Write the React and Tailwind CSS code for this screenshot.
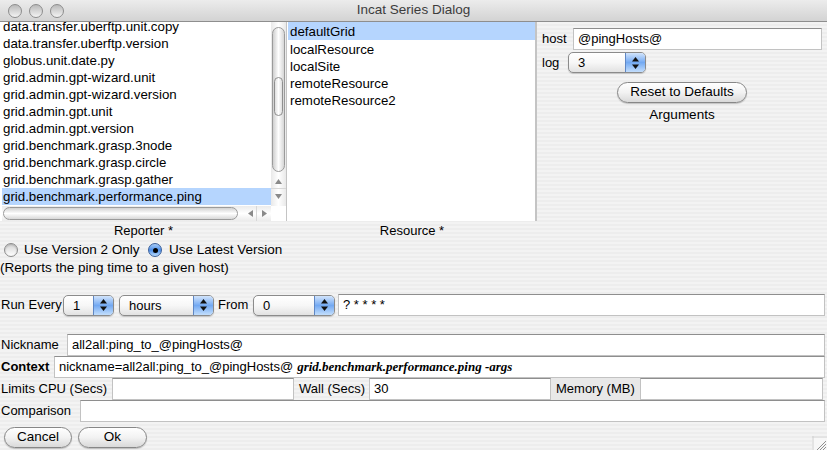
import clsx from "clsx";

const reporters = [
  "data.transfer.uberftp.unit.copy",
  "data.transfer.uberftp.version",
  "globus.unit.date.py",
  "grid.admin.gpt-wizard.unit",
  "grid.admin.gpt-wizard.version",
  "grid.admin.gpt.unit",
  "grid.admin.gpt.version",
  "grid.benchmark.grasp.3node",
  "grid.benchmark.grasp.circle",
  "grid.benchmark.grasp.gather",
  "grid.benchmark.performance.ping",
];

const resources = [
  "defaultGrid",
  "localResource",
  "localSite",
  "remoteResource",
  "remoteResource2",
];

function Arrow({ dir }) {
  const points = {
    up: "0,5 3.5,0 7,5",
    down: "0,0 3.5,5 7,0",
    left: "5,0 0,3.5 5,7",
    right: "0,0 5,3.5 0,7",
  }[dir];
  const size = dir === "up" || dir === "down" ? [7, 5] : [5, 7];
  return (
    <svg width={size[0]} height={size[1]} viewBox={`0 0 ${size[0]} ${size[1]}`}>
      <polygon points={points} fill="#8a8a8a" />
    </svg>
  );
}

function PopupArrows() {
  return (
    <svg width="7" height="12" viewBox="0 0 7 12">
      <polygon points="0,4.5 3.5,0 7,4.5" fill="#111" />
      <polygon points="0,7.5 3.5,12 7,7.5" fill="#111" />
    </svg>
  );
}

function Popup({ value, className }) {
  return (
    <div
      className={clsx(
        "flex h-[21px] items-stretch overflow-hidden rounded-[5px] border border-[#8b8b8b] bg-gradient-to-b from-white via-[#f7f7f7] to-[#e2e2e2] shadow-[0_1px_1px_rgba(0,0,0,0.18)]",
        className
      )}
    >
      <span className="flex-1 pl-[9px] leading-[19px]">{value}</span>
      <span className="flex w-[20px] items-center justify-center border-l border-[#5f87c4] bg-gradient-to-b from-[#d2e4fb] via-[#73a9f2] to-[#c3defc]">
        <PopupArrows />
      </span>
    </div>
  );
}

function Field({ value, className, children }) {
  return (
    <div
      className={clsx(
        "flex h-[22px] items-center overflow-hidden border border-[#c2c2c2] border-t-[#8e8e8e] bg-white pl-[4px] leading-[20px] whitespace-nowrap",
        className
      )}
    >
      {children ?? value}
    </div>
  );
}

function AquaButton({ label, className }) {
  return (
    <div
      className={clsx(
        "flex h-[21px] items-center justify-center rounded-full border border-[#878787] bg-gradient-to-b from-white via-[#f2f2f2] to-[#d9d9d9] shadow-[0_1px_1px_rgba(0,0,0,0.2)]",
        className
      )}
    >
      {label}
    </div>
  );
}

function Radio({ checked }) {
  return checked ? (
    <span className="flex h-[14px] w-[14px] shrink-0 items-center justify-center rounded-full border border-[#3b5f99] bg-gradient-to-b from-[#a9cdf7] via-[#4d8ee8] to-[#b9dcfc]">
      <span className="h-[5px] w-[5px] rounded-full bg-black" />
    </span>
  ) : (
    <span className="h-[14px] w-[14px] shrink-0 rounded-full border border-[#8c8c8c] bg-gradient-to-b from-[#d4d4d4] to-white shadow-[inset_0_1px_2px_rgba(0,0,0,0.2)]" />
  );
}

function ReporterList() {
  return (
    <div className="grid h-[199px] w-[287px] grid-cols-[1fr_15px] grid-rows-[1fr_15px] border-r-2 border-r-[#c4c4c4] bg-white pl-[2px]">
      <div className="overflow-hidden">
        <div className="-mt-[4px]">
          {reporters.map((name, i) => (
            <div
              key={name}
              className={clsx(
                "h-[17px] pl-[1px] text-[13.3px] leading-[17px] whitespace-nowrap",
                i === reporters.length - 1 && "bg-[#b5d5fe]"
              )}
            >
              {name}
            </div>
          ))}
        </div>
      </div>
      <div className="flex flex-col items-center bg-gradient-to-r from-[#e9e9e9] via-white to-[#e9e9e9] pt-[5px]">
        <div className="flex h-[145px] w-[13px] flex-col rounded-full border border-[#9b9b9b] bg-gradient-to-r from-[#cfcfcf] via-white to-[#d6d6d6] pt-[49px]">
          <div className="mx-[1px] h-[39px] rounded-full border border-[#8f8f8f] bg-gradient-to-r from-[#dedede] via-white to-[#dedede]" />
        </div>
        <div className="mt-[3px] flex h-[14px] w-full items-center justify-center border-b border-[#d7d7d7]">
          <Arrow dir="up" />
        </div>
        <div className="flex h-[14px] w-full items-center justify-center">
          <Arrow dir="down" />
        </div>
      </div>
      <div className="flex items-center bg-gradient-to-b from-[#ebebeb] via-white to-[#ebebeb] pl-[1px]">
        <div className="h-[13px] w-[235px] rounded-full border border-[#9b9b9b] bg-gradient-to-b from-[#d2d2d2] via-white to-[#d8d8d8]" />
        <div className="ml-[6px] flex h-full w-[13px] items-center justify-center border-r border-[#d7d7d7]">
          <Arrow dir="left" />
        </div>
        <div className="flex h-full w-[14px] items-center justify-center">
          <Arrow dir="right" />
        </div>
      </div>
      <div className="bg-white" />
    </div>
  );
}

function ResourceList() {
  return (
    <div className="h-[199px] w-[250px] border-r-2 border-r-[#c4c4c4] bg-white pl-[1px]">
      {resources.map((name, i) => (
        <div
          key={name}
          className={clsx(
            "h-[17px] pl-[2px] text-[13.3px] leading-[17px]",
            i === 0 && "mb-[1px] h-[18px] bg-[#b5d5fe] leading-[19px]"
          )}
        >
          {name}
        </div>
      ))}
    </div>
  );
}

export default function App() {
  return (
    <div className="flex h-[450px] w-[827px] flex-col overflow-hidden bg-[repeating-linear-gradient(0deg,#ededed_0px,#ededed_2px,#f3f3f3_2px,#f3f3f3_4px)] font-['Liberation_Sans',Arial,sans-serif] text-[13px] text-black">
      <div className="relative flex h-[22px] shrink-0 items-center justify-center border-b border-[#8e8e8e] bg-gradient-to-b from-[#ececec] to-[#d3d3d3]">
        <div className="absolute left-[8px] top-[4px] flex gap-[7px]">
          <span className="h-[14px] w-[14px] rounded-full border border-[#8d8d8d] bg-gradient-to-b from-[#b9b9b9] to-[#f4f4f4]" />
          <span className="h-[14px] w-[14px] rounded-full border border-[#8d8d8d] bg-gradient-to-b from-[#b9b9b9] to-[#f4f4f4]" />
          <span className="h-[14px] w-[14px] rounded-full border border-[#8d8d8d] bg-gradient-to-b from-[#b9b9b9] to-[#f4f4f4]" />
        </div>
        <span className="text-[13.5px] text-[#3c3c3c]">Incat Series Dialog</span>
      </div>

      <div className="flex">
        <div className="flex flex-col">
          <ReporterList />
          <div className="h-[20px] text-center leading-[20px]">Reporter *</div>
        </div>
        <div className="flex flex-col">
          <ResourceList />
          <div className="h-[20px] text-center leading-[20px]">Resource *</div>
        </div>
        <div className="flex flex-1 flex-col pt-[6px]">
          <div className="flex items-center pr-[5px]">
            <span className="w-[36px] pl-[5px]">host</span>
            <Field value="@pingHosts@" className="flex-1" />
          </div>
          <div className="mt-[2px] flex items-center">
            <span className="w-[31px] pl-[5px]">log</span>
            <Popup value="3" className="h-[20px] w-[78px]" />
          </div>
          <div className="mt-[9px] flex justify-center">
            <AquaButton label="Reset to Defaults" className="h-[20px] w-[130px] text-[13.5px]" />
          </div>
          <div className="mt-[3px] text-center text-[13.5px] leading-[17px]">Arguments</div>
        </div>
      </div>

      <div className="flex h-[18px] items-center pl-[4px]">
        <Radio />
        <span className="ml-[6px] mr-[6px] w-[118px] text-[13.5px]">Use Version 2 Only</span>
        <Radio checked />
        <span className="ml-[7px] text-[13.5px]">Use Latest Version</span>
      </div>
      <div className="h-[18px] text-[13.5px] leading-[18px]">(Reports the ping time to a given host)</div>

      <div className="mt-[17px] flex items-center pr-[2px]">
        <span className="w-[63px] pl-[1px]">Run Every</span>
        <Popup value="1" className="w-[51px]" />
        <Popup value="hours" className="ml-[5px] w-[95px]" />
        <span className="w-[39px] pl-[4px]">From</span>
        <Popup value="0" className="w-[82px]" />
        <Field value="? * * * *" className="ml-[3px] flex-1" />
      </div>

      <div className="mt-[18px] flex flex-col pr-[2px]">
        <div className="flex items-center">
          <span className="w-[67px] pl-[1px]">Nickname</span>
          <Field value="all2all:ping_to_@pingHosts@" className="flex-1" />
        </div>
        <div className="flex items-center">
          <span className="w-[54px] pl-[1px] font-bold">Context</span>
          <Field className="flex-1">
            <span>nickname=all2all:ping_to_@pingHosts@</span>
            <span className="ml-[4px] font-['Liberation_Serif',serif] text-[13px] font-bold italic">
              grid.benchmark.performance.ping -args
            </span>
          </Field>
        </div>
        <div className="flex items-center pr-[2px]">
          <span className="w-[112px] whitespace-nowrap pl-[1px]">Limits CPU (Secs)</span>
          <Field value="" className="w-[182px]" />
          <span className="w-[75px] pl-[5px]">Wall (Secs)</span>
          <Field value="30" className="w-[182px]" />
          <span className="h-[22px] w-[89px] bg-[#e8e8e8] pl-[5px] leading-[22px]">Memory (MB)</span>
          <Field value="" className="flex-1" />
        </div>
        <div className="flex items-center">
          <span className="w-[80px] pl-[1px]">Comparison</span>
          <Field value="" className="flex-1" />
        </div>
      </div>

      <div className="relative mt-[5px] flex gap-[6px] pl-[4px]">
        <AquaButton label="Cancel" className="w-[68px] text-[13.5px]" />
        <AquaButton label="Ok" className="w-[69px] text-[13.5px]" />
        <svg className="absolute right-0 top-[9px]" width="15" height="15" viewBox="0 0 15 15">
          <rect width="15" height="15" fill="#f7f7f7" />
          <line x1="1" y1="0" x2="1" y2="15" stroke="#d0d0d0" />
          <line x1="0" y1="1" x2="15" y2="1" stroke="#d0d0d0" />
          <line x1="5" y1="14" x2="14" y2="5" stroke="#8f8f8f" />
          <line x1="8" y1="14" x2="14" y2="8" stroke="#8f8f8f" />
          <line x1="11" y1="14" x2="14" y2="11" stroke="#8f8f8f" />
        </svg>
      </div>
    </div>
  );
}
